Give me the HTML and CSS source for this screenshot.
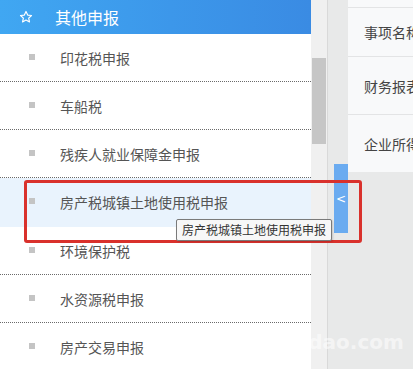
FILE: index.html
```html
<!DOCTYPE html>
<html lang="zh-CN">
<head>
<meta charset="utf-8">
<title>其他申报</title>
<link rel="stylesheet" href="styles.css">
</head>
<body>
<div class="app">
  <aside class="menu">
    <div class="menu-head">
      <svg class="star" viewBox="0 0 24 24" width="14" height="14"><path d="M12 2.5l2.9 6.2 6.6.7-4.9 4.5 1.4 6.6L12 17.1l-5.9 3.4 1.4-6.6-4.9-4.5 6.6-.7z" fill="none" stroke="#fff" stroke-width="2" stroke-linejoin="round"/></svg>
      <span class="menu-title">其他申报</span>
    </div>
    <ul class="menu-list">
      <li class="item"><i class="dot"></i>印花税申报</li>
      <li class="item"><i class="dot"></i>车船税</li>
      <li class="item"><i class="dot"></i>残疾人就业保障金申报</li>
      <li class="item active"><i class="dot"></i>房产税城镇土地使用税申报</li>
      <li class="item"><i class="dot"></i>环境保护税</li>
      <li class="item"><i class="dot"></i>水资源税申报</li>
      <li class="item"><i class="dot"></i>房产交易申报</li>
    </ul>
  </aside>
  <div class="scrollbar"><div class="thumb"></div></div>
  <div class="gutter"><div class="toggle">&lt;</div></div>
  <main class="panel">
    <div class="card">
      <div class="row">事项名称</div>
      <div class="row">财务报表</div>
      <div class="row">企业所得税</div>
    </div>
  </main>
  <div class="highlight-box"></div>
  <div class="tooltip">房产税城镇土地使用税申报</div>
  <div class="watermark">ezhidao.com</div>
</div>
</body>
</html>
```

FILE: styles.css
```css
html, body {
  margin: 0;
  padding: 0;
}
body {
  font-family: "Noto Sans CJK SC", "Noto Sans", sans-serif;
  background: #e8e9e9;
}
.app {
  position: relative;
  display: flex;
  width: 413px;
  height: 369px;
  overflow: hidden;
}
.menu {
  width: 311px;
  flex: none;
  background: #fff;
}
.menu-head {
  height: 34px;
  display: flex;
  align-items: center;
  background: linear-gradient(90deg, #40a7f2 0%, #3c97ea 55%, #3a8be3 100%);
  color: #fff;
}
.star {
  margin-left: 19px;
  width: 14px;
  height: 14px;
}
.menu-title {
  margin-left: 22px;
  font-size: 16px;
  line-height: 20px;
}
.menu-list {
  list-style: none;
  margin: 0;
  padding: 0;
}
.item {
  height: 47px;
  border-bottom: 1px dotted #6a6a6a;
  display: flex;
  align-items: center;
  font-size: 14px;
  color: #555;
  white-space: nowrap;
}
.item.active {
  background: #e9f3fd;
  border-bottom-color: #e9f3fd;
  height: 48px;
  margin-top: 0;
}
.dot {
  width: 6px;
  height: 6px;
  background: #c4c4c4;
  margin-left: 29px;
  margin-right: 25px;
  margin-top: -2px;
}
.scrollbar {
  width: 16px;
  flex: none;
  background: #f0f0f0;
  border-right: 1px solid #d9d9d9;
}
.thumb {
  margin: 58px 1px 0 1px;
  height: 86px;
  background: #c6c6c6;
}
.gutter {
  width: 20px;
  flex: none;
  background: #e8e9e9;
}
.toggle {
  margin: 164px 0 0 6px;
  width: 14px;
  height: 69px;
  background: #6aabf0;
  color: #fff;
  font-size: 12px;
  display: flex;
  align-items: center;
  justify-content: center;
  font-family: "DejaVu Sans", sans-serif;
}
.panel {
  flex: 1;
  background: #e8e9e9;
}
.card {
  background: #f8f9fa;
  padding-top: 7px;
}
.row {
  border-top: 1px solid #e3e4e5;
  height: 57px;
  display: flex;
  align-items: center;
  padding-left: 16px;
  font-size: 14px;
  color: #444;
  white-space: nowrap;
}
.row:first-child {
  height: 48px;
}
.highlight-box {
  position: absolute;
  left: 24px;
  top: 180px;
  width: 332px;
  height: 57px;
  border: 3px solid #d9312c;
  border-radius: 3px;
  pointer-events: none;
}
.tooltip {
  position: absolute;
  left: 176px;
  top: 219px;
  height: 20px;
  padding: 0 5px;
  line-height: 20px;
  background: #f7f7f7;
  border: 1px solid #7a7a7a;
  border-radius: 2px;
  box-shadow: 1px 1px 2px rgba(0,0,0,0.15);
  font-size: 12px;
  color: #333;
  white-space: nowrap;
}
.watermark {
  position: absolute;
  left: 262px;
  top: 330px;
  font-family: "DejaVu Sans", sans-serif;
  font-weight: bold;
  font-size: 20px;
  color: rgba(255,255,255,0.55);
  white-space: nowrap;
}
```
